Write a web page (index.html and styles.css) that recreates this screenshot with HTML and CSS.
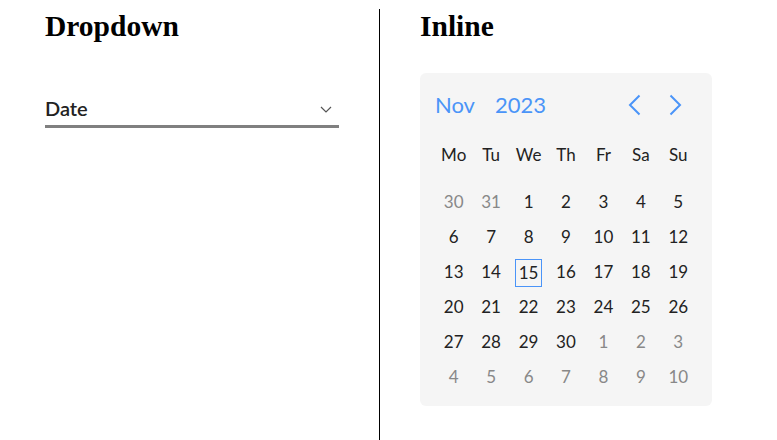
FILE: index.html
```html
<!DOCTYPE html>
<html>
<head>
<meta charset="utf-8">
<link rel="stylesheet" href="styles.css">
</head>
<body>
<div class="layout">
  <section class="col col-left">
    <h1 class="title">Dropdown</h1>
    <div class="select">
      <span class="select-label">Date</span>
      <svg class="select-caret" width="12" height="7" viewBox="0 0 12 7"><path d="M1 1 L6 6 L11 1" fill="none" stroke="#555" stroke-width="1.2"/></svg>
    </div>
  </section>
  <section class="col col-right">
    <h1 class="title">Inline</h1>
    <div class="calendar">
      <div class="cal-head">
        <span class="cal-month">Nov</span>
        <span class="cal-year">2023</span>
        <div class="cal-nav">
          <svg width="24" height="24" viewBox="0 0 24 24"><path d="M17.5 2.5 L8 12 L17.5 21.5" fill="none" stroke="#4a94f8" stroke-width="2"/></svg>
          <svg width="24" height="24" viewBox="0 0 24 24"><path d="M6.5 2.5 L16 12 L6.5 21.5" fill="none" stroke="#4a94f8" stroke-width="2"/></svg>
        </div>
      </div>
      <div class="cal-grid cal-week">
        <span>Mo</span><span>Tu</span><span>We</span><span>Th</span><span>Fr</span><span>Sa</span><span>Su</span>
      </div>
      <div class="cal-grid cal-days">
        <span class="muted">30</span><span class="muted">31</span><span>1</span><span>2</span><span>3</span><span>4</span><span>5</span>
        <span>6</span><span>7</span><span>8</span><span>9</span><span>10</span><span>11</span><span>12</span>
        <span>13</span><span>14</span><span class="today">15</span><span>16</span><span>17</span><span>18</span><span>19</span>
        <span>20</span><span>21</span><span>22</span><span>23</span><span>24</span><span>25</span><span>26</span>
        <span>27</span><span>28</span><span>29</span><span>30</span><span class="muted">1</span><span class="muted">2</span><span class="muted">3</span>
        <span class="muted">4</span><span class="muted">5</span><span class="muted">6</span><span class="muted">7</span><span class="muted">8</span><span class="muted">9</span><span class="muted">10</span>
      </div>
    </div>
  </section>
</div>
</body>
</html>
```
FILE: styles.css
```css
html, body {
  margin: 0;
  padding: 0;
  background: #fff;
}
body {
  padding: 9px 8px 0 8px;
  height: 440px;
  box-sizing: border-box;
  overflow: hidden;
}
.layout {
  display: flex;
  height: 431px;
}
.col-left {
  width: 371px;
  box-sizing: border-box;
  padding: 0 40px 0 37px;
}
.col-right {
  border-left: 1px solid #000;
  padding-left: 40px;
}
.title {
  font-family: "Liberation Serif", "Times New Roman", serif;
  font-weight: bold;
  font-size: 29.5px;
  line-height: 34px;
  margin: 0;
  color: #000;
}
.select {
  margin-top: 54px;
  display: flex;
  align-items: center;
  justify-content: space-between;
  border-bottom: 3px solid #808080;
  padding-bottom: 5px;
  font-family: Lato, "Noto Sans", sans-serif;
}
.select-label {
  font-size: 20px;
  line-height: 23px;
  font-weight: 600;
  color: #222;
}
.select-caret {
  margin-right: 7px;
  margin-top: 1px;
}
.calendar {
  margin-top: 30px;
  width: 292px;
  height: 333px;
  box-sizing: border-box;
  background: #f5f5f5;
  border-radius: 6px;
  padding: 18px 15px 14px 15px;
  font-family: Lato, "Noto Sans", sans-serif;
  color: #222;
}
.cal-head {
  display: flex;
  align-items: center;
  height: 27px;
  margin-bottom: 23px;
  color: #4a94f8;
  font-size: 22px;
  line-height: 27px;
}
.cal-month {
  margin-left: 0;
}
.cal-year {
  margin-left: 20px;
}
.cal-nav {
  margin-left: auto;
  margin-right: 9px;
  display: flex;
  gap: 18px;
}
.cal-nav svg {
  display: block;
}
.cal-grid {
  display: grid;
  grid-template-columns: repeat(7, 1fr);
  justify-items: center;
  font-size: 17px;
}
.cal-grid span {
  width: 27px;
  height: 28px;
  line-height: 25px;
  text-align: center;
  box-sizing: border-box;
  white-space: nowrap;
}
.cal-week {
  margin-bottom: 20px;
  color: #222;
}
.cal-week span {
  width: 30px;
  line-height: 27px;
}
.cal-days {
  row-gap: 7px;
}
.muted {
  color: #888;
}
.today {
  border: 1px solid #4a94f8;
  line-height: 23px;
}
```
